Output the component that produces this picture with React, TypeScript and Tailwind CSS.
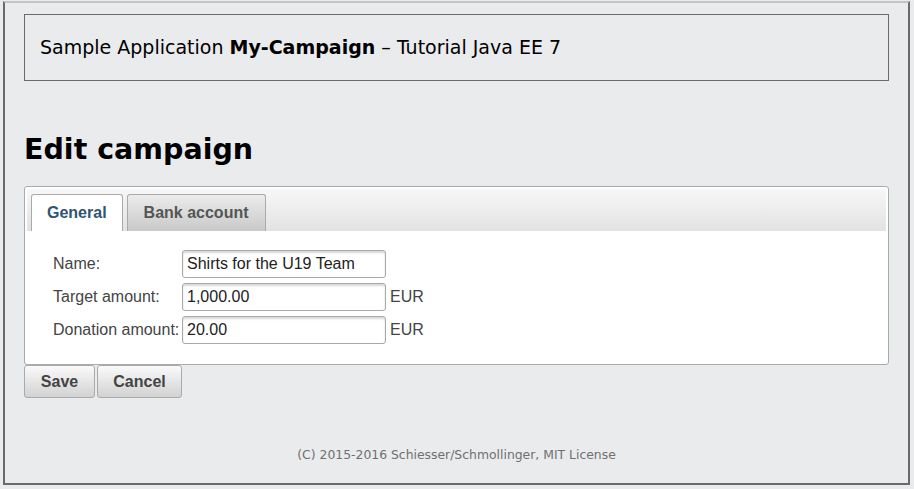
const fields = [
  { label: "Name:", value: "Shirts for the U19 Team", unit: "" },
  { label: "Target amount:", value: "1,000.00", unit: "EUR" },
  { label: "Donation amount:", value: "20.00", unit: "EUR" },
];

const App = () => {
  return (
    <div className="h-[489px] w-[914px] overflow-hidden bg-[#eaebed] pt-px">
      <div className="ml-[3px] flex h-[484px] w-[907px] flex-col border-2 border-[#6a6a6a] border-t-[#c4c4c4] pl-[19px] pr-[19px]">
        <div className="mt-[11px] flex h-[67px] items-center border border-[#6a6a6a] pl-[15px] font-['DejaVu_Sans',sans-serif] text-[19px] text-black">
          <span>
            Sample Application <b>My-Campaign</b> – Tutorial Java EE 7
          </span>
        </div>

        <h1 className="mt-[52px] font-['DejaVu_Sans',sans-serif] text-[28.5px] font-bold leading-[34px] text-black">
          Edit campaign
        </h1>

        <div className="mt-[19px] h-[179px] rounded-[3px] border border-[#aaaaaa] bg-white p-[2px] font-['Liberation_Sans',Arial,sans-serif]">
          <div className="flex h-[42px] items-end gap-[4px] rounded-t-[2px] bg-gradient-to-b from-[#f7f7f7] to-[#e2e2e2] pl-[4px]">
            <div className="flex h-[37px] items-center rounded-t-[3px] border border-b-0 border-[#aaaaaa] bg-white px-[15px] text-[16px] font-bold text-[#2e5574]">
              General
            </div>
            <div className="flex h-[37px] items-center rounded-t-[3px] border border-b-0 border-[#aaaaaa] bg-gradient-to-b from-[#ececec] to-[#c9c9c9] px-[16px] text-[16px] font-bold text-[#555555]">
              Bank account
            </div>
          </div>
          <div className="flex flex-col gap-[5px] pl-[26px] pt-[19px]">
            {fields.map((f) => (
              <div key={f.label} className="flex h-[28px] items-center text-[16px]">
                <span className="w-[129px] text-[#444444]">{f.label}</span>
                <div className="flex h-[28px] w-[204px] items-center rounded-[3px] border border-[#a8a8a8] bg-white pl-[4px] text-[#222222] shadow-[inset_0_2px_2px_rgba(0,0,0,0.15)]">
                  {f.value}
                </div>
                {f.unit && <span className="ml-[4px] text-[#444444]">{f.unit}</span>}
              </div>
            ))}
          </div>
        </div>

        <div className="flex gap-[2px] font-['Liberation_Sans',Arial,sans-serif] text-[16px] font-bold text-[#444444]">
          <button className="h-[33px] w-[71px] rounded-[3px] border border-[#aaaaaa] bg-gradient-to-b from-[#fafafa] to-[#d2d2d2]">
            Save
          </button>
          <button className="h-[33px] w-[85px] rounded-[3px] border border-[#aaaaaa] bg-gradient-to-b from-[#fafafa] to-[#d2d2d2]">
            Cancel
          </button>
        </div>

        <div className="mt-[48px] text-center font-['DejaVu_Sans',sans-serif] text-[12.4px] text-[#707070]">
          (C) 2015-2016 Schiesser/Schmollinger, MIT License
        </div>
      </div>
    </div>
  );
};

export default App;
